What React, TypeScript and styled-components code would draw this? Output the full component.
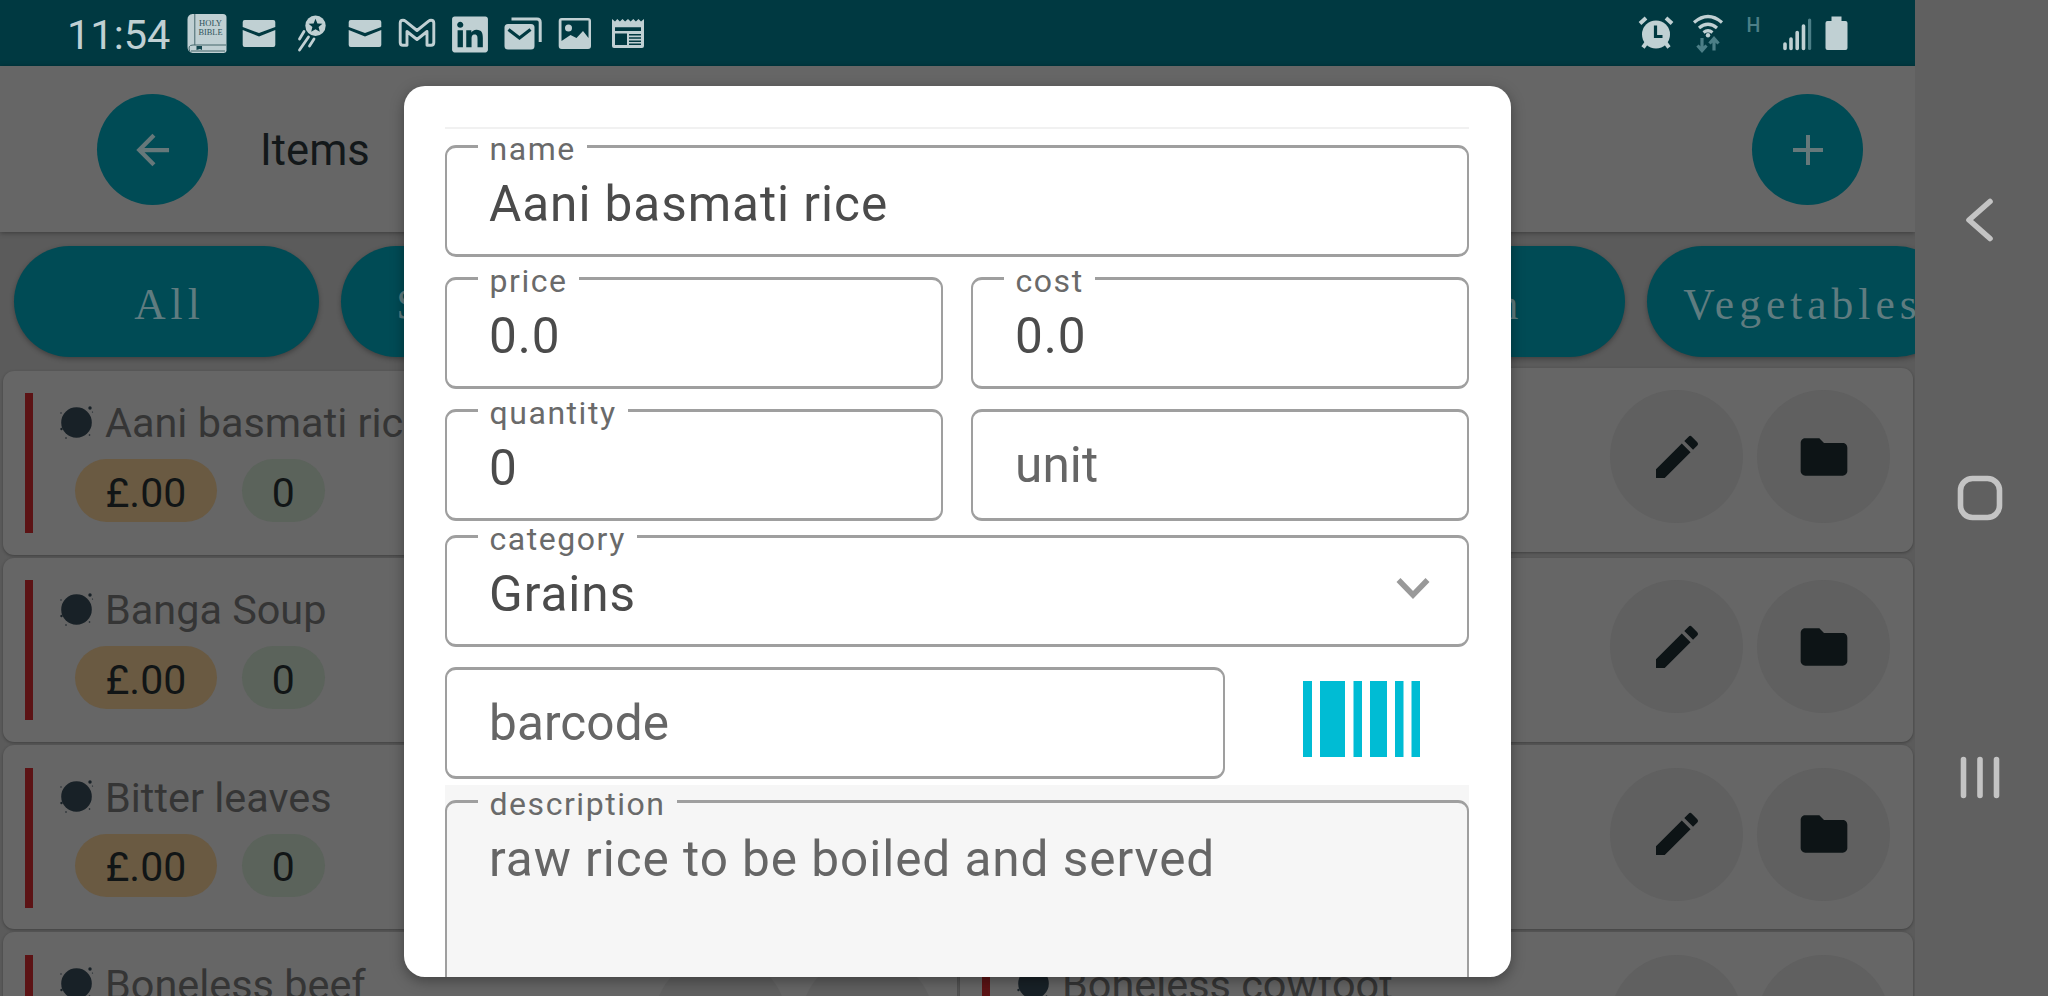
import type { ReactNode } from "react";
import styled, { createGlobalStyle } from "styled-components";
import { FaLinkedin } from "react-icons/fa";
import { MdEdit, MdFolder } from "react-icons/md";

const GlobalStyle = createGlobalStyle`
  * {
    box-sizing: border-box;
  }

  body {
    margin: 0;
    background: #606060;
    font-family: Roboto, "Liberation Sans", sans-serif;
    overflow: hidden;
  }
`;

const colors = {
  teal: "#004b55",
  accent: "#00bcd4",
  status: "#003941",
  statusIcon: "#c0d0d3",
  statusMuted: "#4c7f87",
  surface: "#666666",
  strip: "#5b5b5b",
  outline: "#9f9f9f",
  onTeal: "#66787a",
  nav: "#c4c4c4",
};

const Device = styled.div`
  position: relative;
  display: flex;
  width: 2048px;
  height: 996px;
  overflow: hidden;
`;

const AppArea = styled.div`
  display: flex;
  flex-direction: column;
  width: 1915px;
  overflow: hidden;
  background: ${colors.strip};
`;

/* Status bar */

const StatusBar = styled.div`
  display: flex;
  flex-shrink: 0;
  align-items: flex-start;
  height: 66px;
  padding: 14px 67px 0 67px;
  background: ${colors.status};
`;

const Clock = styled.div`
  width: 119.5px;
  color: ${colors.statusIcon};
  font-size: 41.5px;
  line-height: 41px;
`;

const StatusIcons = styled.div`
  display: flex;
  gap: 12.7px;
  flex: 1;
`;

const StatusGlyph = styled.svg<{ $width?: number }>`
  display: block;
  width: ${({ $width = 40 }) => $width}px;
  height: 40px;
  color: ${colors.statusIcon};
  fill: currentColor;
`;

const LinkedinBox = styled.div`
  display: flex;
  justify-content: center;
  width: 40px;
  height: 40px;
  color: ${colors.statusIcon};
  font-size: 41px;
`;

/* Header */

const Header = styled.div`
  position: relative;
  display: flex;
  flex-shrink: 0;
  align-items: center;
  height: 166px;
  padding: 1px 52px 0 97px;
  background: ${colors.surface};
  box-shadow: 0 1px 5px rgba(0, 0, 0, 0.35);
`;

const RoundButton = styled.button`
  display: flex;
  align-items: center;
  justify-content: center;
  width: 111px;
  height: 111px;
  padding: 0;
  border: none;
  border-radius: 50%;
  background: ${colors.teal};
`;

const Title = styled.div`
  flex: 1;
  padding: 1px 0 0 52px;
  color: #13181a;
  font-size: 43.5px;
`;

/* Category tabs */

const Tabs = styled.div`
  display: flex;
  flex-shrink: 0;
  gap: 21.6px;
  height: 138.7px;
  padding: 14px 0 0 14px;
  overflow: hidden;
`;

const Tab = styled.div`
  display: flex;
  flex: none;
  align-items: center;
  justify-content: center;
  min-width: 305px;
  height: 111px;
  padding: 4px 30px 0 36px;
  border-radius: 56px;
  background: ${colors.teal};
  box-shadow: 0 2px 5px rgba(0, 0, 0, 0.3);
  color: #5f7c80;
  font-family: "Liberation Serif", serif;
  font-size: 43.5px;
  letter-spacing: 5px;
`;

/* Item cards */

const Columns = styled.div`
  display: grid;
  grid-template-columns: 954px 953px;
  column-gap: 3px;
  padding-left: 3px;
`;

const Column = styled.div<{ $lift?: boolean }>`
  display: flex;
  flex-direction: column;
  gap: 3.2px;

  > :first-child {
    margin-top: ${({ $lift }) => ($lift ? "-3px" : "0")};
    margin-bottom: ${({ $lift }) => ($lift ? "3px" : "0")};
  }
`;

const Card = styled.div`
  display: flex;
  height: 184px;
  padding: 22.5px 23px 0 22px;
  border-radius: 11px;
  background: ${colors.surface};
  box-shadow: 0 1px 3px rgba(0, 0, 0, 0.3);
`;

const StockBar = styled.div`
  width: 8px;
  height: 140px;
  background: #5c1315;
`;

const CardBody = styled.div`
  flex: 1;
  padding: 4px 0 0 26px;
`;

const ItemName = styled.div`
  display: flex;
  align-items: center;
  gap: 10px;
  height: 52px;
  color: #353535;
  font-size: 41.4px;
  white-space: nowrap;
`;

const Splat = styled.svg`
  width: 36px;
  height: 36px;
  margin-top: -3px;
  fill: #182127;
`;

const Chips = styled.div`
  display: flex;
  gap: 25px;
  padding: 10px 0 0 16px;
`;

const Chip = styled.div<{ $tone: "price" | "stock" }>`
  display: flex;
  align-items: center;
  height: 63px;
  padding: 4px ${({ $tone }) => ($tone === "price" ? "30.5px" : "30px")} 0;
  border-radius: 32px;
  background: ${({ $tone }) => ($tone === "price" ? "#6a5a42" : "#5b635b")};
  color: #111516;
  font-size: 41px;
`;

const Actions = styled.div`
  display: flex;
  gap: 14px;
`;

const ActionButton = styled.button`
  display: flex;
  align-items: center;
  justify-content: center;
  width: 133px;
  height: 133px;
  padding: 0;
  border: none;
  border-radius: 50%;
  background: #606060;
  color: #0d1416;
  font-size: 56px;
`;

/* Android navigation bar */

const NavBar = styled.div`
  display: flex;
  flex-direction: column;
  align-items: center;
  width: 133px;
  padding: 196.5px 3px 0 0;
  background: #606060;
`;

const NavIcon = styled.svg<{ $gap?: number }>`
  flex: none;
  width: 48px;
  height: 46px;
  margin-bottom: ${({ $gap = 0 }) => $gap}px;
  fill: none;
  stroke: ${colors.nav};
  stroke-width: 5.6;
  stroke-linecap: round;
  stroke-linejoin: round;
`;

/* Dialog */

const Dialog = styled.div`
  position: absolute;
  top: 86px;
  left: 404px;
  display: flex;
  flex-direction: column;
  width: 1107px;
  height: 891px;
  padding: 41px 42px 0 41px;
  border-radius: 21px;
  background: #fff;
  box-shadow: 0 4px 14px rgba(0, 0, 0, 0.35);
  overflow: hidden;
`;

const Divider = styled.div`
  flex: none;
  height: 2px;
  margin-bottom: 16px;
  background: #f1f1f1;
`;

const FieldRow = styled.div<{ $after: number }>`
  display: flex;
  flex: none;
  gap: 28px;
  margin-bottom: ${({ $after }) => $after}px;
`;

const FieldBox = styled.div<{ $filled: boolean; $width?: number; $tall?: boolean }>`
  position: relative;
  display: flex;
  flex: ${({ $width }) => ($width ? `0 0 ${$width}px` : "1")};
  align-items: ${({ $tall }) => ($tall ? "flex-start" : "center")};
  justify-content: space-between;
  height: ${({ $tall }) => ($tall ? "280px" : "111.5px")};
  padding: ${({ $filled, $tall }) => ($tall ? "26px" : $filled ? "7px" : "1px")} 36px 0 42px;
  border: solid ${colors.outline};
  border-width: 3px 2px;
  border-radius: 11px;
  color: ${({ $filled, $tall }) => ($filled && !$tall ? "#4b4b4b" : "#666666")};
  font-size: 49.5px;
  letter-spacing: ${({ $filled }) => ($filled ? "0.95px" : "0.1px")};
  line-height: 60px;
`;

const FieldLabel = styled.div<{ $bg: string }>`
  position: absolute;
  top: -17px;
  left: 31px;
  padding: 0 11px 0 11.5px;
  background: ${({ $bg }) => $bg};
  color: #6a6a6a;
  font-size: 32px;
  letter-spacing: 1.55px;
  line-height: 36px;
`;

const Chevron = styled.svg`
  width: 34px;
  height: 22px;
  margin: 0 1px 10px 0;
  fill: none;
  stroke: #999;
  stroke-width: 5.5;
`;

const ScanButton = styled.div`
  display: flex;
  flex: 1;
  align-items: center;
  padding: 0 0 8px 49.5px;
`;

const DescriptionArea = styled.div`
  display: flex;
  flex: none;
  height: 295px;
  padding-top: 15px;
  background: #f6f6f6;
`;

interface FieldProps {
  label?: string;
  value: string;
  width?: number;
  tall?: boolean;
  bg?: string;
  children?: ReactNode;
}

const Field = ({ label, value, width, tall, bg = "#fff", children }: FieldProps) => (
  <FieldBox $filled={Boolean(label)} $width={width} $tall={tall}>
    {label && <FieldLabel $bg={bg}>{label}</FieldLabel>}
    <span>{value}</span>
    {children}
  </FieldBox>
);

const MailIcon = () => (
  <StatusGlyph viewBox="0 0 40 40">
    <path d="M3.7 8a2 2 0 0 1 2-2h28.6a2 2 0 0 1 2 2v5L20 19 3.7 13z" />
    <path d="M3.7 16 20 22.500 36.300 16V31a2 2 0 0 1-2 2H5.700a2 2 0 0 1-2-2z" />
  </StatusGlyph>
);

const BibleIcon = () => (
  <StatusGlyph viewBox="0 0 40 40">
    <path d="M5.500 0H36q3.500 0 3.500 3.500V37q-.5 2-3 2H5.500Q.5 38 .5 33V5.500Q.5.500 5.500 0z" />
    <path d="M7.800 0V31M3 38Q0 31 6 31H39M4 37H38" fill="none" stroke="#45666b" strokeWidth="1" />
    <path d="M9.500 32h5.500v4l-2-1-3.500 1z" fill="#12464e" />
    <g fill="#2f535a" fontFamily="Liberation Serif, serif" fontSize="8.500">
      <text x="12" y="12" textLength="23" lengthAdjust="spacingAndGlyphs">
        HOLY
      </text>
      <text x="11.500" y="21.200" textLength="24" lengthAdjust="spacingAndGlyphs">
        BIBLE
      </text>
    </g>
  </StatusGlyph>
);

const CometIcon = () => (
  <StatusGlyph viewBox="0 0 40 40">
    <circle cx="23.500" cy="11.700" r="10.200" />
    <path
      d="m23.500 4.800 1.900 4.600 5 .4-3.800 3.200 1.200 4.800-4.300-2.600-4.300 2.600 1.200-4.800-3.800-3.200 5-.4z"
      fill={colors.status}
    />
    <path
      d="M12 17.500 7.500 25M16.500 23 7.500 36M22 25l-4.500 7"
      fill="none"
      stroke="currentColor"
      strokeWidth="2.800"
      strokeLinecap="round"
    />
  </StatusGlyph>
);

const GmailIcon = () => (
  <StatusGlyph viewBox="0 0 40 40">
    <path
      d="M3.200 28.500V9Q3.200 6.200 6 6.200q1.300 0 2.400.9L20 16.500 31.600 7.100q1.100-.9 2.400-.9 2.800 0 2.800 2.800v19.500q0 2.800-2.800 2.800h-4V17.500L20 25.500 10 17.500v13.800H6q-2.800 0-2.800-2.800z"
      fill="none"
      stroke="currentColor"
      strokeWidth="2.900"
      strokeLinejoin="round"
    />
  </StatusGlyph>
);

const MailStackIcon = () => (
  <StatusGlyph viewBox="0 0 40 40">
    <path d="M8.500 5h25.500q3.200 0 3.200 3.200V28" fill="none" stroke="currentColor" strokeWidth="3" />
    <rect x="1.500" y="10" width="30" height="25.500" rx="3.500" />
    <path d="m5.500 15.500 11 8.500 11-8.500" fill="none" stroke={colors.status} strokeWidth="3.200" />
  </StatusGlyph>
);

const ImageIcon = () => (
  <StatusGlyph viewBox="0 0 40 40">
    <rect x="3.700" y="4" width="32.300" height="31" rx="3" />
    <path d="M6.500 6.500h27V24l-5.500-7-6.500 7-6-3-9 6z" fill={colors.status} />
    <circle cx="13.500" cy="14" r="3.500" />
  </StatusGlyph>
);

const NewsIcon = () => (
  <StatusGlyph viewBox="0 0 40 40">
    <path d="M4 5l3 2.500L9.300 5l2.600 2.500L14.500 5l2.600 2.500L20 5l2.600 2.500L25.300 5l2.600 2.500L30.500 5l2.500 2.500L36 5v27q0 2-2 2H6q-2 0-2-2z" />
    <path
      d="M7 13.200h26v3.800H7zM7 19.500h12V31H7zM21 20h12v1.500H21zM21 23.200h12v1.500H21zM21 26.400h12v1.500H21zM21 29.600h12v1.500H21z"
      fill={colors.status}
    />
  </StatusGlyph>
);

const SystemStatus = () => (
  <StatusGlyph $width={212} viewBox="0 0 212 40">
    <circle cx="20" cy="20.500" r="14" />
    <path
      d="m4 9.500 6-5.500M30 4l6 5.500M11 28l-4 5.500M29 28l4 5.500"
      fill="none"
      stroke="currentColor"
      strokeWidth="4"
    />
    <path d="M19.500 11.500v11h7" fill="none" stroke={colors.status} strokeWidth="3.200" />
    <path
      d="M58 8.500q14-12 28 0M63 14q9-7.500 18 0M67.500 18.500q4.500-3.500 9 0"
      fill="none"
      stroke="currentColor"
      strokeWidth="3.200"
    />
    <circle cx="72" cy="21.300" r="2.200" />
    <path
      d="M66 24v12M61.500 31.500 66 36.500l4.500-5M78 36.500V25M73.500 29.500 78 24.500l4.500 5"
      fill="none"
      stroke={colors.statusMuted}
      strokeWidth="3.200"
    />
    <text x="110.500" y="18.300" fill={colors.statusMuted} fontSize="19.500" fontWeight="500">
      H
    </text>
    <path
      d="M149 30v4.500M155 25v9.500M161.200 18.500v16M167.500 12v22.500"
      stroke="currentColor"
      strokeWidth="3.600"
      strokeLinecap="round"
    />
    <path d="M173.600 6v28.500" stroke={colors.statusMuted} strokeWidth="3.200" strokeLinecap="round" />
    <path d="M195.500 2.500h10V7h4q2 0 2 2v25q0 2-2 2h-18q-2 0-2-2V9q0-2 2-2h4z" />
  </StatusGlyph>
);

const ItemCard = ({ name }: { name: string }) => (
  <Card>
    <StockBar />
    <CardBody>
      <ItemName>
        <Splat viewBox="0 0 36 36">
          <circle cx="17.500" cy="18.500" r="15.300" />
          <circle cx="31" cy="4" r="1.700" />
          <circle cx="2" cy="9" r=".7" />
          <circle cx="2.500" cy="25" r="1.200" />
          <circle cx="7" cy="34" r=".8" />
          <circle cx="30.500" cy="31" r=".8" />
          <circle cx="33.500" cy="8" r=".6" />
        </Splat>
        {name}
      </ItemName>
      <Chips>
        <Chip $tone="price">£.00</Chip>
        <Chip $tone="stock">0</Chip>
      </Chips>
    </CardBody>
    <Actions>
      <ActionButton aria-label="Edit">
        <MdEdit />
      </ActionButton>
      <ActionButton aria-label="Open">
        <MdFolder />
      </ActionButton>
    </Actions>
  </Card>
);

const categories = ["All", "Sausages", "Grains", "Meat", "Fish", "Vegetables"];
const leftItems = ["Aani basmati rice", "Banga Soup", "Bitter leaves", "Boneless beef"];
const rightItems = ["Amala", "Beans", "Bitter kola", "Boneless cowfoot"];

export default function App() {
  return (
    <>
      <GlobalStyle />
      <Device>
        <AppArea>
          <StatusBar>
            <Clock>11:54</Clock>
            <StatusIcons>
              <BibleIcon />
              <MailIcon />
              <CometIcon />
              <MailIcon />
              <GmailIcon />
              <LinkedinBox>
                <FaLinkedin />
              </LinkedinBox>
              <MailStackIcon />
              <ImageIcon />
              <NewsIcon />
            </StatusIcons>
            <SystemStatus />
          </StatusBar>

          <Header>
            <RoundButton aria-label="Back">
              <svg width="34" height="34" viewBox="0 0 36 36" fill="none" stroke={colors.onTeal} strokeWidth="4.500">
                <path d="M35 18H4M19 2.500 3.500 18 19 33.500" />
              </svg>
            </RoundButton>
            <Title>Items</Title>
            <RoundButton aria-label="Add">
              <svg width="30" height="30" viewBox="0 0 30 30" stroke={colors.onTeal} strokeWidth="4">
                <path d="M15 0v30M0 15h30" />
              </svg>
            </RoundButton>
          </Header>

          <Tabs>
            {categories.map((category) => (
              <Tab key={category}>{category}</Tab>
            ))}
          </Tabs>

          <Columns>
            <Column>
              {leftItems.map((name) => (
                <ItemCard key={name} name={name} />
              ))}
            </Column>
            <Column $lift>
              {rightItems.map((name) => (
                <ItemCard key={name} name={name} />
              ))}
            </Column>
          </Columns>
        </AppArea>

        <NavBar>
          <NavIcon viewBox="0 0 48 46" $gap={232}>
            <path d="M34 4.500 13 23l21 18.500" />
          </NavIcon>
          <NavIcon viewBox="0 0 48 46" $gap={234}>
            <rect x="4.500" y="3.500" width="39" height="39" rx="12" />
          </NavIcon>
          <NavIcon viewBox="0 0 48 46">
            <path d="M7.500 4.500v36M24 4.500v36M40.500 4.500v36" />
          </NavIcon>
        </NavBar>

        <Dialog>
          <Divider />
          <FieldRow $after={20.5}>
            <Field label="name" value="Aani basmati rice" />
          </FieldRow>
          <FieldRow $after={20.5}>
            <Field label="price" value="0.0" />
            <Field label="cost" value="0.0" />
          </FieldRow>
          <FieldRow $after={14.5}>
            <Field label="quantity" value="0" />
            <Field value="unit" />
          </FieldRow>
          <FieldRow $after={20.5}>
            <Field label="category" value="Grains">
              <Chevron viewBox="0 0 34 22">
                <path d="m2.500 2 14.500 15L31.500 2" />
              </Chevron>
            </Field>
          </FieldRow>
          <FieldRow $after={6.5}>
            <Field value="barcode" width={780} />
            <ScanButton>
              <svg width="118" height="76" viewBox="0 0 118 76" fill={colors.accent}>
                <path d="M0 0h9v76H0zM17 0h25v76H17zM50.500 0h8.500v76h-8.500zM67 0h17v76H67zM92 0h8.500v76H92zM108.500 0h8.500v76h-8.500z" />
              </svg>
            </ScanButton>
          </FieldRow>
          <DescriptionArea>
            <Field label="description" value="raw rice to be boiled and served" bg="#f6f6f6" tall />
          </DescriptionArea>
        </Dialog>
      </Device>
    </>
  );
}
